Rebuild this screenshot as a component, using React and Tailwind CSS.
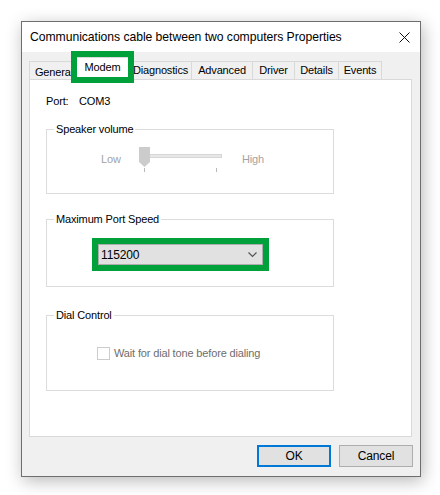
import React from "react";

const tabs = [
  { name: "General", w: "w-[46px]" },
  { name: "Modem", w: "w-[55px]", active: true },
  { name: "Diagnostics", w: "w-[62px]" },
  { name: "Advanced", w: "w-[61px]" },
  { name: "Driver", w: "w-[42px]" },
  { name: "Details", w: "w-[44px]" },
  { name: "Events", w: "w-[43px]" },
];

function GroupBox({ label, className, children }) {
  return (
    <div className={"relative border border-[#dcdcdc] " + className}>
      <span className="absolute -top-[8px] left-[7px] bg-white px-[2px] leading-[14px] text-black">
        {label}
      </span>
      {children}
    </div>
  );
}

export default function App() {
  const font = { fontFamily: '"Liberation Sans", Arial, sans-serif' };

  return (
    <div className="w-[440px] h-[495px] bg-white pt-[21px] pl-[21px]" style={font}>
      <div className="w-[400px] h-[456px] border border-[#6e6e6e] bg-[#f0f0f0] shadow-[2px_4px_16px_rgba(0,0,0,0.28)] flex flex-col text-[11px] tracking-[-0.15px] text-black">
        {/* title bar */}
        <div className="h-[30px] bg-white flex items-center justify-between pl-[8px] pr-[10px]">
          <span className="text-[12.2px] tracking-[-0.05px]">Communications cable between two computers Properties</span>
          <svg width="11" height="11" viewBox="0 0 11 11">
            <path d="M0.5 0.5 L10.5 10.5 M10.5 0.5 L0.5 10.5" stroke="#111" strokeWidth="1" />
          </svg>
        </div>

        {/* tabs */}
        <div className="relative flex items-end h-[27px] pl-[7px]">
          {tabs.map((t) =>
            t.active ? (
              <div
                key={t.name}
                className="relative z-10 -mx-[2px] -mb-px h-[23px] w-[59px] bg-white border border-b-0 border-[#d9d9d9] flex items-center justify-center pb-[3px]"
              >
                {t.name}
              </div>
            ) : (
              <div
                key={t.name}
                className={"h-[18px] border border-b-0 border-l-0 first:border-l border-[#d9d9d9] flex items-center justify-center overflow-hidden whitespace-nowrap " + t.w}
              >
                <span className={t.name === "General" ? "pl-[4px] self-start mt-[2px]" : ""}>{t.name}</span>
              </div>
            )
          )}
          {/* annotation highlight */}
          <div className="absolute left-[49px] -top-[1px] w-[63px] h-[32px] border-[6px] border-[#00a03a] z-20" />
        </div>

        {/* panel */}
        <div className="mx-[7px] w-[383px] h-[358px] bg-white border border-[#d9d9d9] pt-[15px] pl-[16px]">
          <div className="flex h-[12px] items-center">
            <span className="w-[33px]">Port:</span>
            <span>COM3</span>
          </div>

          <GroupBox label="Speaker volume" className="mt-[22px] w-[288px] h-[65px]">
            <div className="flex items-start pt-[17px] pl-[54px]">
              <span className="text-[#a3a3a3] mt-[4px] w-[38px]">Low</span>
              <div className="relative w-[84px] h-[26px]">
                <div className="absolute left-[10px] top-[7px] w-[73px] h-[4px] bg-[#e7e7e7] border border-[#d6d6d6]" />
                <svg className="absolute left-0 top-0" width="12" height="21" viewBox="0 0 12 21">
                  <path d="M0 0 H11 V15 L5.5 20 L0 15 Z" fill="#cccccc" />
                </svg>
                <div className="absolute left-[5px] top-[21px] w-px h-[4px] bg-[#b8b8b8]" />
                <div className="absolute left-[77px] top-[21px] w-px h-[4px] bg-[#b8b8b8]" />
              </div>
              <span className="text-[#a3a3a3] mt-[4px] ml-[19px]">High</span>
            </div>
          </GroupBox>

          <GroupBox label="Maximum Port Speed" className="mt-[25px] w-[288px] h-[68px]">
            <div className="pt-[18px] pl-[45px]">
              <div className="w-[177px] h-[33px] border-[6px] border-[#00a03a]">
                <div className="h-full bg-[#e1e1e1] border border-[#adadad] flex items-center justify-between pl-[2px] pr-[5px]">
                  <span className="text-[12px]">115200</span>
                  <svg width="9" height="6" viewBox="0 0 9 6">
                    <path d="M0.5 0.5 L4.5 4.5 L8.5 0.5" stroke="#555" strokeWidth="1.2" fill="none" />
                  </svg>
                </div>
              </div>
            </div>
          </GroupBox>

          <GroupBox label="Dial Control" className="mt-[28px] w-[288px] h-[76px]">
            <div className="flex items-center pt-[29px] pl-[50px]">
              <div className="w-[13px] h-[13px] border border-[#cccccc] bg-white" />
              <span className="ml-[4px] text-[#6d6d6d]">Wait for dial tone before dialing</span>
            </div>
          </GroupBox>
        </div>

        {/* buttons */}
        <div className="flex justify-end gap-[8px] pr-[7px] pt-[8px]">
          <button className="w-[74px] h-[22px] bg-[#e1e1e1] border-2 border-[#0078d7] text-[12px]">OK</button>
          <button className="w-[74px] h-[22px] bg-[#e1e1e1] border border-[#adadad] text-[12px]">Cancel</button>
        </div>
      </div>
    </div>
  );
}
